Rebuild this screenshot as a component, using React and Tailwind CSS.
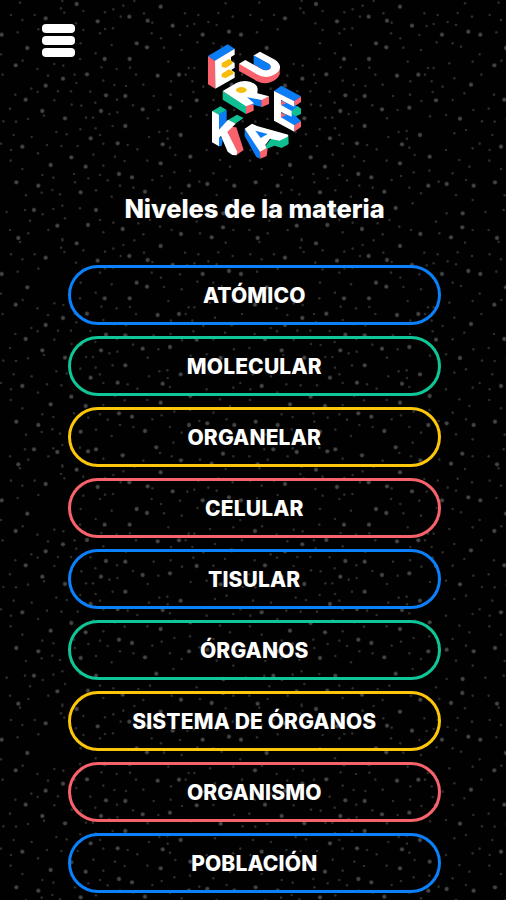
const BIG = [
  [230,12],[482,20],[137,55],[388,50],[443,62],[293,64],[518,77],[5,104],[82,144],[410,130],[441,142],[608,104],[687,95],
  [314,177],[389,177],[47,196],[473,227],[537,224],[261,223],[189,236],[137,257],[77,299],[318,286],[376,288],[303,333],
  [127,333],[428,328],[510,323],[590,301],[195,355],[376,378],[542,405],[67,440],[272,415],[353,430],[488,433],[571,470],
  [482,490],[214,472],[257,500],[152,495],[357,522],[396,532],[49,547],[115,557],[242,577],[435,575],[567,557],[622,552],
  [703,557],[670,640],[635,712],[669,682],[288,630],[102,630],[172,677],[264,675],[368,687],[543,702],[55,714],[662,356],
  [695,254],[469,624],
];
const SMALL = [
  [187,3],[403,3],[60,8],[33,45],[67,60],[104,45],[53,97],[115,88],[183,25],[193,38],[250,33],[315,37],[340,28],[370,17],
  [362,50],[339,85],[315,87],[455,100],[483,115],[540,105],[555,40],[595,45],[583,72],[562,78],[432,40],[457,68],[250,90],
  [228,70],[242,130],[287,160],[335,135],[300,100],[545,150],[492,143],[592,127],[3,163],[68,182],[163,192],[190,197],
  [240,177],[304,202],[350,207],[390,203],[505,185],[566,204],[583,204],[408,224],[144,227],[8,224],[112,207],[224,224],
  [229,249],[310,242],[343,255],[378,258],[430,254],[513,244],[577,244],[557,224],[94,266],[113,276],[46,284],[174,274],
  [213,274],[271,275],[163,301],[286,308],[351,299],[461,288],[512,284],[546,303],[580,276],[30,326],[215,314],[244,317],
  [399,316],[475,330],[328,342],[352,337],[132,347],[84,357],[48,365],[10,364],[258,353],[279,353],[443,355],[572,349],
  [338,378],[287,385],[241,388],[169,396],[41,405],[95,411],[200,403],[300,405],[447,411],[478,396],[502,393],[503,416],
  [3,431],[141,435],[184,438],[233,438],[310,431],[383,435],[412,448],[510,443],[33,450],[114,460],[280,464],[345,470],
  [526,465],[32,482],[374,483],[310,497],[442,482],[67,507],[523,517],[570,512],[222,522],[300,525],[127,525],[160,533],
  [485,528],[457,540],[323,541],[265,535],[225,547],[360,557],[400,563],[510,563],[545,580],[157,570],[288,571],[180,583],
  [125,578],[78,586],[335,590],[598,545],[520,610],[20,636],[75,630],[187,617],[128,643],[160,627],[240,625],[90,662],
  [195,655],[300,660],[340,668],[30,690],[145,690],[85,700],[187,717],[310,697],[430,703],[415,670],[515,690],[590,665],
  [600,700],[480,680],[450,660],[655,39],[640,130],[625,66],[677,10],[698,50],[650,75],[630,190],[665,140],[700,185],
  [645,235],[610,260],[675,280],[640,300],[702,330],[620,345],[680,390],[645,400],[620,450],[700,445],[660,480],[690,500],
  [640,520],[680,540],[650,585],[700,600],[622,640],[700,690],
];

const COLUMNS = [0, 718, 1436];
// Vertical repeats; the short ones omit the strip between 632 and 671.
const ROWS = [
  { y: 0, short: false },
  { y: 718, short: true },
  { y: 1397, short: false },
  { y: 2115, short: true },
];

function Dots({ points, r, fill }) {
  return ROWS.flatMap((row) =>
    COLUMNS.flatMap((cx) =>
      points
        .filter(([, y]) => !row.short || y < 632 || y > 671)
        .map(([x, y]) => (
          <circle
            key={`${row.y}-${cx}-${x}-${y}`}
            cx={x + cx}
            cy={y + row.y - (row.short && y > 671 ? 39 : 0)}
            r={r}
            fill={fill}
          />
        ))
    )
  );
}

function Starfield() {
  return (
    <svg className="pointer-events-none absolute inset-0" width="506" height="900" viewBox="0 0 1518 2700" aria-hidden="true">
      <Dots points={SMALL} r={3.9} fill="#2c2c2c" />
      <Dots points={BIG} r={7.2} fill="#242424" />
      <Dots points={BIG} r={5} fill="#454545" />
    </svg>
  );
}

function Logo() {
  const W = "#ffffff", B = "#0a7cf5", R = "#f9616c", G = "#0fbf92", Y = "#f6bd0c";
  return (
    <svg className="h-[130px] w-[120px]" viewBox="0 0 360 390" role="img" aria-label="Eureka">
      <polygon fill={R} points="39,62 61,77 61,161 39,148" />
      <polygon fill={B} points="39,63 98,28 119,41 61,78" />
      <polygon fill={W} points="60,77 119,41 119,59 108,66 108,79 119,84 119,98 109,105 119,112 119,128 61,161" />
      <polygon fill={Y} points="80,84 102,72 112,79 112,86 92,99 80,95" />
      <polygon fill={Y} points="80,116 102,103 115,110 115,117 92,129 80,126" />

      <path fill={R} d="M132 87 L255 95 L254 118 Q249 133 226 142 Q206 149 185 138 L132 108Z" />
      <path fill={W} d="M132 86 L151 75 L200 103 Q216 109 226 101 Q230 94 222 87 L175 62 L195 50 L240 74 Q257 86 255 99 Q251 116 226 124 Q205 130 184 117Z" />
      <path fill={B} d="M176 61 L222 87 Q230 95 225 101 Q215 109 201 103 L176 87Z" />

      <polygon fill={G} points="83,168 153,211 153,237 83,194" />
      <polygon fill={R} points="153,212 176,204 176,227 153,237" />
      <polygon fill={B} points="151,190 160,181 200,190 200,216 166,207" />
      <polygon fill={R} points="199,193 222,184 222,207 199,217" />
      <path fill={W} d="M83 168 L124 144 Q143 135 165 140 Q188 147 188 163 L187 175 L222 184 L200 195 L156 187 L177 205 L153 214Z" />
      <ellipse fill={Y} cx="139" cy="165" rx="16" ry="9" />

      <polygon fill={B} points="237,168 259,152 318,184 298,200" />
      <polygon fill={R} points="298,199 318,184 318,201 299,214" />
      <polygon fill={B} points="258,200 273,193 304,212 318,221 290,232 258,212" />
      <polygon fill={G} points="289,228 308,214 318,221 318,237 297,247 289,244" />
      <polygon fill={B} points="258,237 275,230 302,243 318,258 298,275 258,249" />
      <polygon fill={R} points="298,271 318,258 318,276 298,290" />
      <polygon fill={W} points="237,168 298,199 298,215 258,195 258,210 290,228 290,245 258,231 258,247 298,271 298,290 237,257" />
      <polygon fill={R} points="258,197 274,205 258,211" />
      <polygon fill={R} points="258,233 274,240 258,248" />

      <polygon fill={G} points="51,229 76,214 95,225 72,240" />
      <polygon fill={B} points="71,238 95,225 95,265 71,290" />
      <polygon fill={G} points="98,256 126,239 146,249 119,267" />
      <polygon fill={B} points="70,303 84,311 80,333 70,334" />
      <polygon fill={R} points="94,290 108,275 124,277 146,345 124,361" />
      <polygon fill={W} points="51,228 72,239 72,284 99,254 122,266 97,291 127,350 124,361 112,360 98,350 78,303 72,308 72,334 51,322" />

      <polygon fill={B} points="149,281 196,347 196,371 184,366 149,303" />
      <polygon fill={R} points="194,348 218,339 215,363 196,371" />
      <polygon fill={G} points="213,331 227,313 280,300 281,327 260,339 239,332 214,342" />
      <polygon fill={W} points="149,281 171,266 186,273 280,299 278,305 254,317 225,311 211,330 215,340 195,350" />
      <polygon fill={B} points="181,287 218,297 197,309" />
    </svg>
  );
}

const LEVELS = [
  { label: "ATÓMICO", border: "border-[#0a80fa]" },
  { label: "MOLECULAR", border: "border-[#10c596]" },
  { label: "ORGANELAR", border: "border-[#fcc60b]" },
  { label: "CELULAR", border: "border-[#f8626a]" },
  { label: "TISULAR", border: "border-[#0a80fa]" },
  { label: "ÓRGANOS", border: "border-[#10c596]" },
  { label: "SISTEMA DE ÓRGANOS", border: "border-[#fcc60b]" },
  { label: "ORGANISMO", border: "border-[#f8626a]" },
  { label: "POBLACIÓN", border: "border-[#0a80fa]" },
];

export default function App() {
  return (
    <main className="relative h-[900px] w-[506px] overflow-hidden bg-[#010101] font-['Inter','Liberation_Sans',sans-serif] text-white">
      <Starfield />
      <div className="relative flex flex-col">
        <header className="flex h-[165px] items-start pl-[42px]">
          <button aria-label="Menú" className="mt-[24px] flex w-[33px] flex-col gap-[3.5px]">
            <span className="h-[8.5px] rounded-[4px] bg-white" />
            <span className="h-[8.5px] rounded-[4px] bg-white" />
            <span className="h-[8.5px] rounded-[4px] bg-white" />
          </button>
          <div className="mt-[35px] ml-[120px]">
            <Logo />
          </div>
        </header>
        <h1 className="mt-[28px] h-8 pl-[3px] text-center text-[25.5px] leading-8 font-extrabold tracking-[-0.06px] whitespace-nowrap">
          Niveles de la materia
        </h1>
        <nav className="mt-[40px] ml-[67.5px] flex w-[373.5px] flex-col gap-[11px]">
          {LEVELS.map(({ label, border }) => (
            <button
              key={label}
              className={`h-[60px] shrink-0 rounded-full border-[3px] text-[21px] leading-none font-extrabold tracking-[0.15px] whitespace-nowrap ${border}`}
            >
              {label}
            </button>
          ))}
        </nav>
      </div>
    </main>
  );
}
